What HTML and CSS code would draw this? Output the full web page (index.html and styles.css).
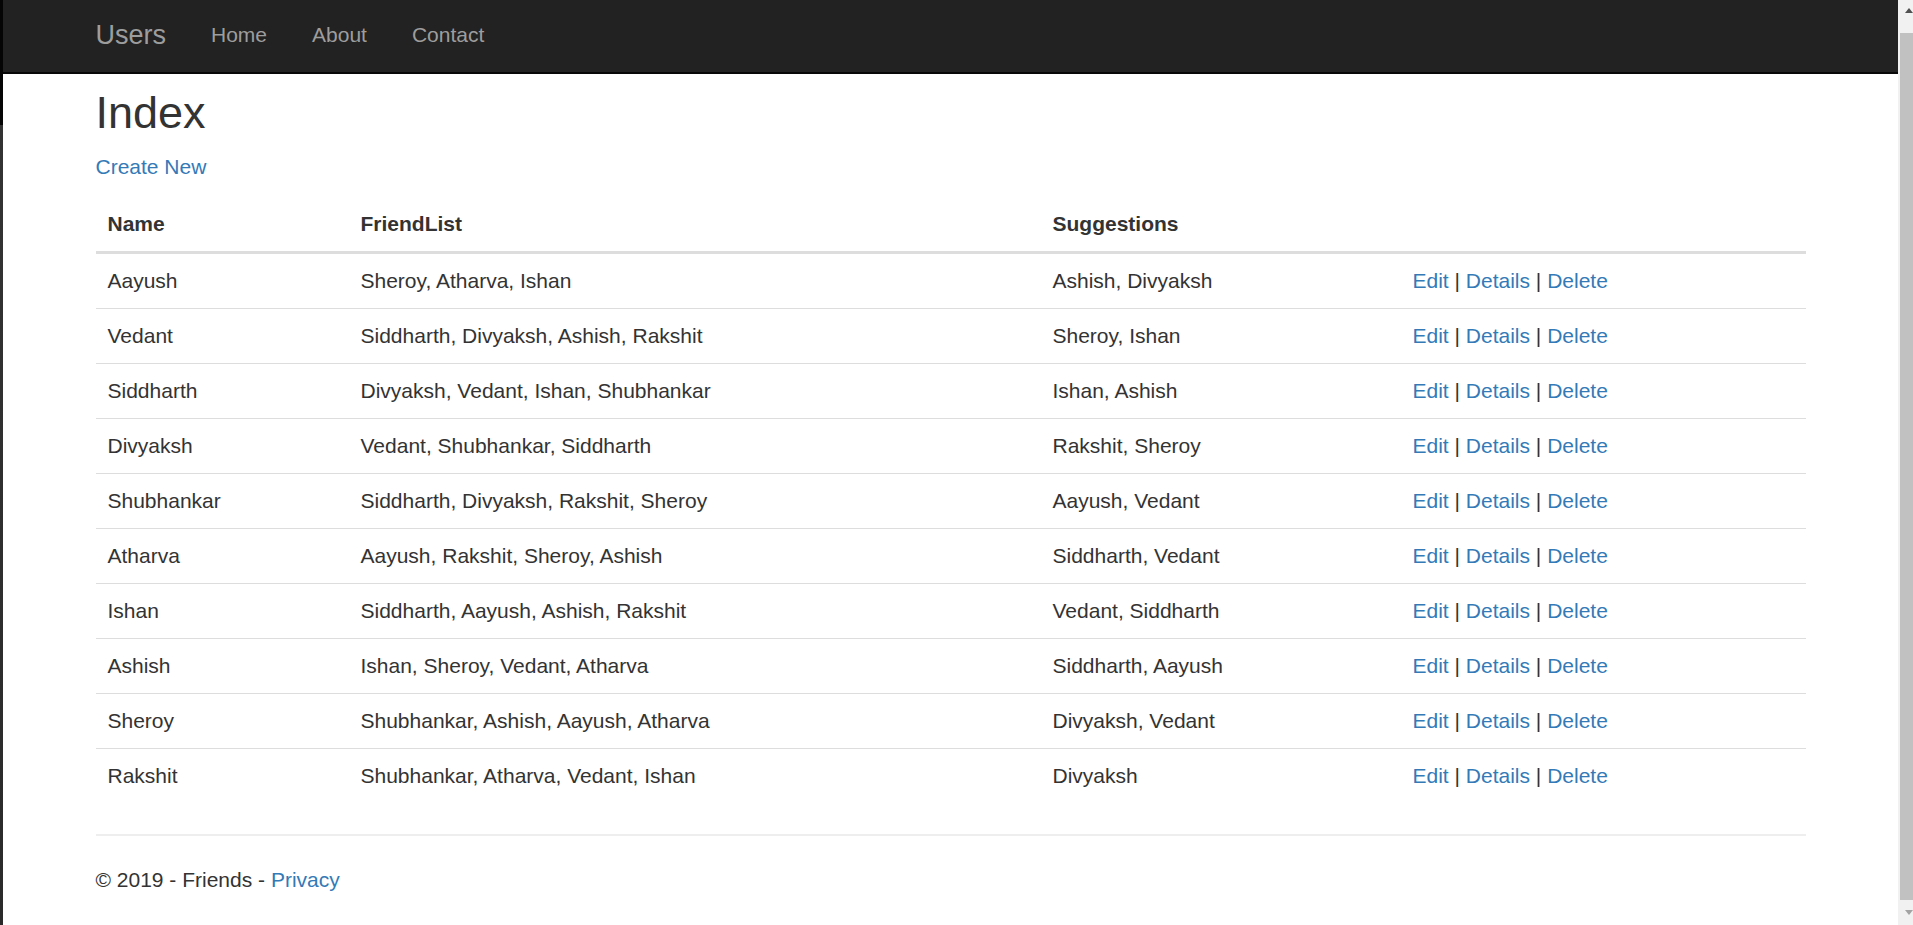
FILE: index.html
```html
<!DOCTYPE html>
<html lang="en">
<head>
<meta charset="utf-8">
<title>Index - Users</title>
<link rel="stylesheet" href="styles.css">
</head>
<body>
<div class="edge"></div>
<div class="page">
  <header class="navbar">
    <div class="nav-inner">
      <a class="brand" href="#">Users</a>
      <nav class="nav-links">
        <a href="#">Home</a>
        <a href="#">About</a>
        <a href="#">Contact</a>
      </nav>
    </div>
  </header>
  <main class="container">
    <h2 class="title">Index</h2>
    <p class="create"><a href="#">Create New</a></p>
    <table class="users">
      <thead>
        <tr>
          <th class="c-name">Name</th>
          <th class="c-friends">FriendList</th>
          <th class="c-sugg">Suggestions</th>
          <th class="c-act"></th>
        </tr>
      </thead>
      <tbody>
        <tr><td>Aayush</td><td>Sheroy, Atharva, Ishan</td><td>Ashish, Divyaksh</td><td><a href="#">Edit</a> | <a href="#">Details</a> | <a href="#">Delete</a></td></tr>
        <tr><td>Vedant</td><td>Siddharth, Divyaksh, Ashish, Rakshit</td><td>Sheroy, Ishan</td><td><a href="#">Edit</a> | <a href="#">Details</a> | <a href="#">Delete</a></td></tr>
        <tr><td>Siddharth</td><td>Divyaksh, Vedant, Ishan, Shubhankar</td><td>Ishan, Ashish</td><td><a href="#">Edit</a> | <a href="#">Details</a> | <a href="#">Delete</a></td></tr>
        <tr><td>Divyaksh</td><td>Vedant, Shubhankar, Siddharth</td><td>Rakshit, Sheroy</td><td><a href="#">Edit</a> | <a href="#">Details</a> | <a href="#">Delete</a></td></tr>
        <tr><td>Shubhankar</td><td>Siddharth, Divyaksh, Rakshit, Sheroy</td><td>Aayush, Vedant</td><td><a href="#">Edit</a> | <a href="#">Details</a> | <a href="#">Delete</a></td></tr>
        <tr><td>Atharva</td><td>Aayush, Rakshit, Sheroy, Ashish</td><td>Siddharth, Vedant</td><td><a href="#">Edit</a> | <a href="#">Details</a> | <a href="#">Delete</a></td></tr>
        <tr><td>Ishan</td><td>Siddharth, Aayush, Ashish, Rakshit</td><td>Vedant, Siddharth</td><td><a href="#">Edit</a> | <a href="#">Details</a> | <a href="#">Delete</a></td></tr>
        <tr><td>Ashish</td><td>Ishan, Sheroy, Vedant, Atharva</td><td>Siddharth, Aayush</td><td><a href="#">Edit</a> | <a href="#">Details</a> | <a href="#">Delete</a></td></tr>
        <tr><td>Sheroy</td><td>Shubhankar, Ashish, Aayush, Atharva</td><td>Divyaksh, Vedant</td><td><a href="#">Edit</a> | <a href="#">Details</a> | <a href="#">Delete</a></td></tr>
        <tr><td>Rakshit</td><td>Shubhankar, Atharva, Vedant, Ishan</td><td>Divyaksh</td><td><a href="#">Edit</a> | <a href="#">Details</a> | <a href="#">Delete</a></td></tr>
      </tbody>
    </table>
    <hr class="rule">
    <footer class="footer">
      <p>&copy; 2019 - Friends - <a href="#">Privacy</a></p>
    </footer>
  </main>
</div>
<div class="scrollbar">
  <div class="sb-top"><span class="arrow-up"></span></div>
  <div class="sb-thumb"></div>
  <div class="sb-bottom"><span class="arrow-down"></span></div>
</div>
</body>
</html>
```

FILE: styles.css
```css
* { box-sizing: border-box; }

html, body {
  margin: 0;
  height: 925px;
  overflow: hidden;
}

body {
  display: flex;
  background: #fff;
  font-family: "Liberation Sans", Arial, Helvetica, sans-serif;
  font-size: 21px;
  line-height: 30px;
  color: #333;
}

a {
  color: #337ab7;
  text-decoration: none;
}

.edge {
  width: 3px;
  flex: none;
  background: linear-gradient(#050505 0, #050505 125px, #333 125px, #2a2a2a 100%);
}

.page {
  flex: 1;
  min-width: 0;
  display: flex;
  flex-direction: column;
}

.navbar {
  height: 74px;
  flex: none;
  background: #222;
  border-bottom: 2px solid #080808;
}

.nav-inner {
  width: 1755px;
  height: 100%;
  margin: 0 auto;
  padding: 0 22.5px 3px;
  display: flex;
  align-items: center;
}

.brand {
  font-size: 27px;
  line-height: 30px;
  color: #9d9d9d;
  padding-right: 22.5px;
}

.nav-links {
  display: flex;
}

.nav-links a {
  color: #9d9d9d;
  font-size: 21px;
  line-height: 30px;
  padding: 0 22.5px;
}

.container {
  width: 1755px;
  margin: 0 auto;
  padding: 13.5px 22.5px 30px;
}

.title {
  margin: 0 0 15px;
  font-size: 45px;
  font-weight: 500;
  line-height: 1.1;
  color: #333;
}

.create {
  margin: 0 0 15px;
}

.users {
  width: 100%;
  border-collapse: collapse;
  table-layout: fixed;
  margin-bottom: 31px;
}

.users th {
  text-align: left;
  font-weight: bold;
  padding: 12px;
  border-bottom: 3px solid #ddd;
  vertical-align: bottom;
}

.users td {
  padding: 12px;
  border-top: 1px solid #ddd;
  vertical-align: top;
}

.users tbody tr:first-child td {
  border-top: 0;
}

.c-name { width: 253px; }
.c-friends { width: 692px; }
.c-sugg { width: 360px; }
.c-act { width: 405px; }

.rule {
  margin: 0 0 29px;
  border: 0;
  border-top: 2px solid #eee;
}

.footer p {
  margin: 0;
}

.scrollbar {
  width: 15px;
  flex: none;
  background: #f1f1f1;
  display: flex;
  flex-direction: column;
}

.sb-top {
  height: 33px;
  position: relative;
}

.sb-thumb {
  flex: 1;
  margin-left: 2px;
  background: #c1c1c1;
}

.sb-bottom {
  height: 25px;
  position: relative;
}

.arrow-up {
  position: absolute;
  left: 7px;
  top: 8px;
  width: 0;
  height: 0;
  border-left: 4px solid transparent;
  border-right: 4px solid transparent;
  border-bottom: 5px solid #505050;
}

.arrow-down {
  position: absolute;
  left: 7px;
  top: 10px;
  width: 0;
  height: 0;
  border-left: 4px solid transparent;
  border-right: 4px solid transparent;
  border-top: 5px solid #a3a3a3;
}
```
